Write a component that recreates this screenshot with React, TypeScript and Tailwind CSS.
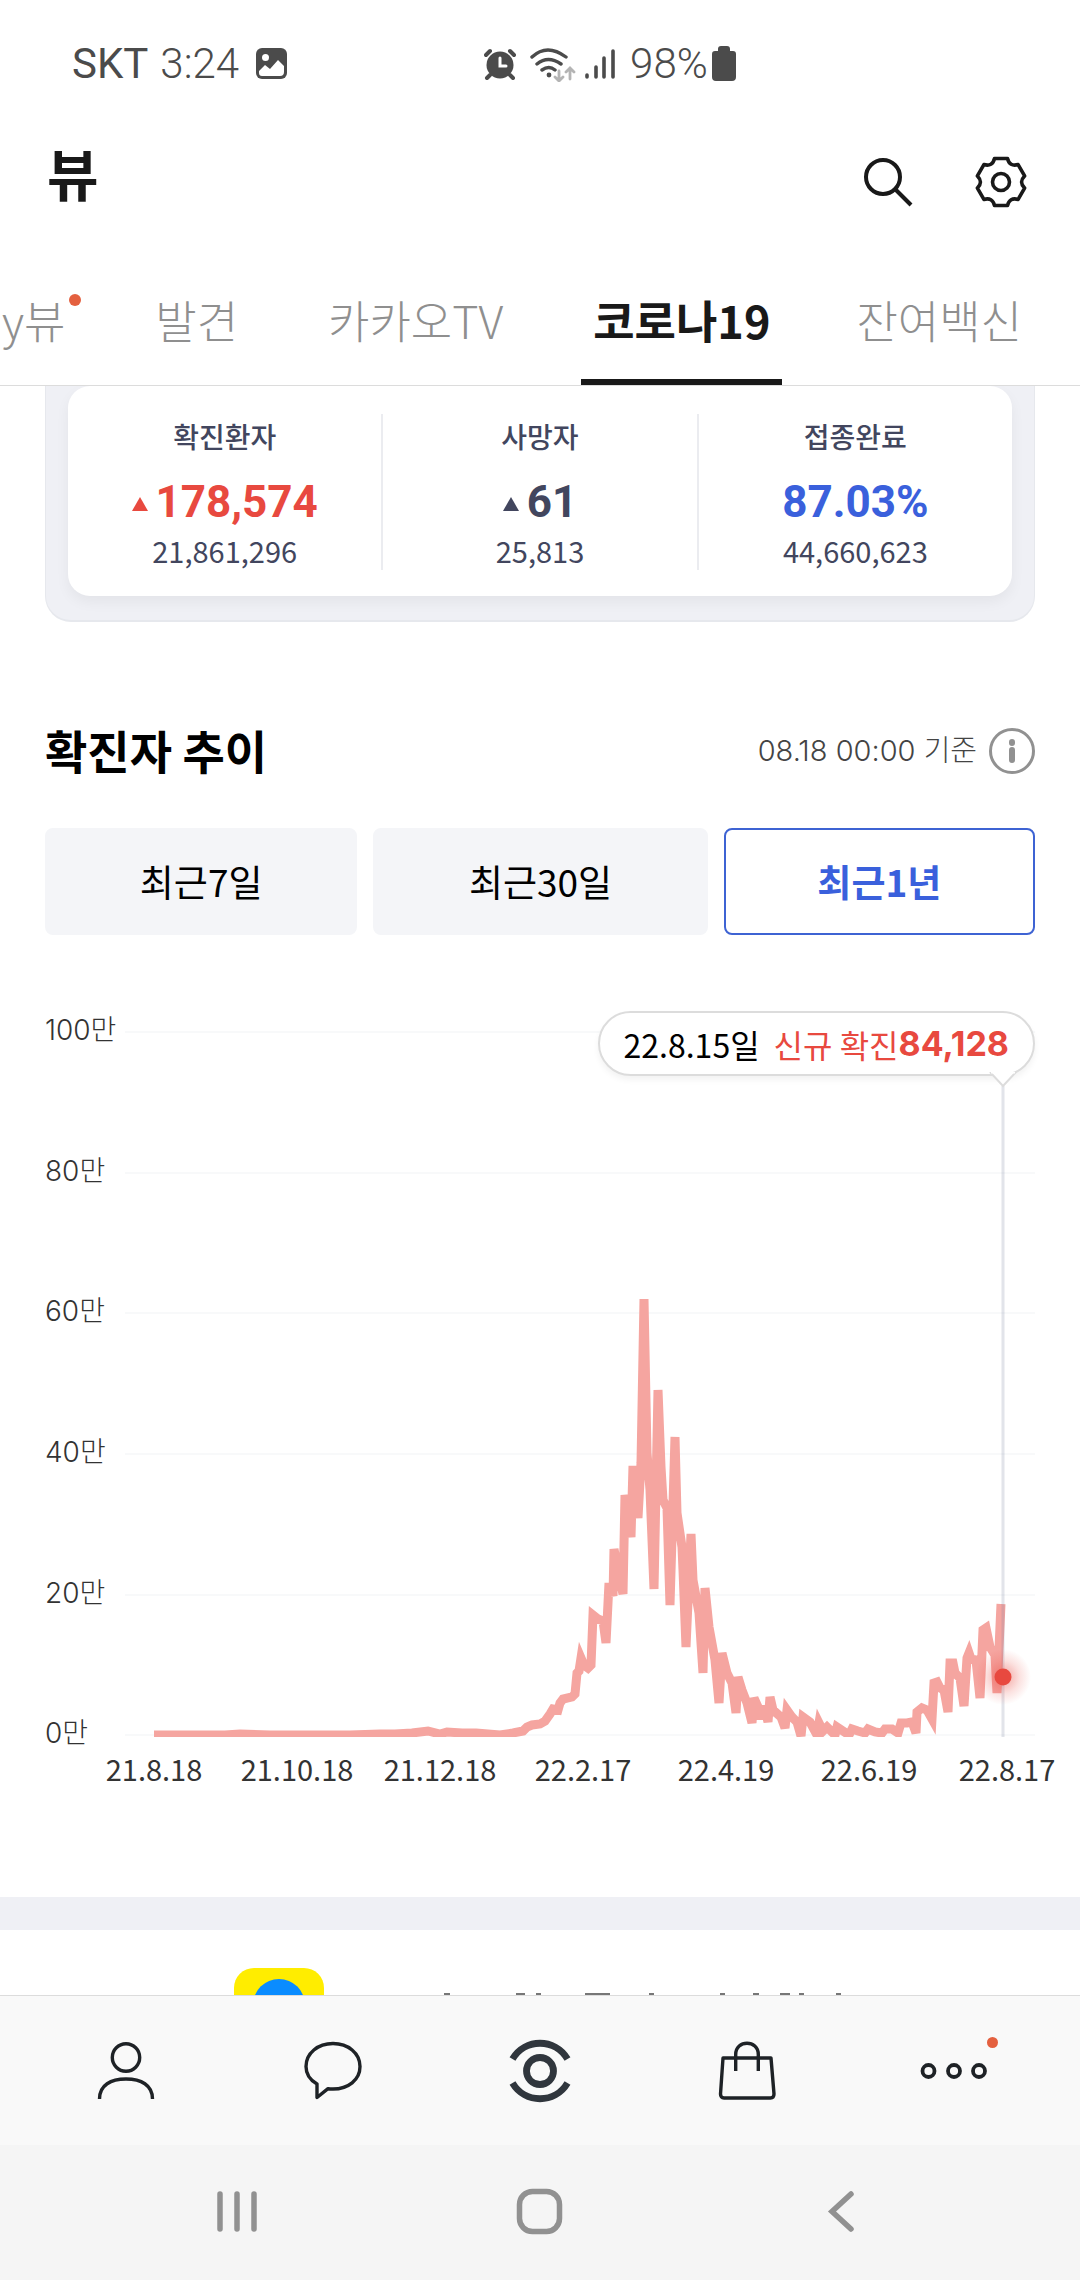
import clsx from "clsx";

const tabs = [
  { label: "y뷰", isNew: true, spacing: "pr-4" },
  { label: "발견", spacing: "px-3" },
  { label: "카카오TV", spacing: "px-4" },
  { label: "코로나19", active: true, spacing: "px-3" },
  { label: "잔여백신", spacing: "px-3" },
];

const stats = [
  { label: "확진환자", value: "178,574", total: "21,861,296", up: true, color: "text-[#e8493f]" },
  { label: "사망자", value: "61", total: "25,813", up: true, color: "text-[#42465e]" },
  { label: "접종완료", value: "87.03%", total: "44,660,623", up: false, color: "text-[#3a60dc]" },
];

const periods = [
  { label: "최근7일" },
  { label: "최근30일" },
  { label: "최근1년", active: true },
];

const yTicks = [
  { label: "100만", y: 32 },
  { label: "80만", y: 173 },
  { label: "60만", y: 313 },
  { label: "40만", y: 454 },
  { label: "20만", y: 595 },
  { label: "0만", y: 735 },
];

const xTicks = [
  { label: "21.8.18", x: 154 },
  { label: "21.10.18", x: 297 },
  { label: "21.12.18", x: 440 },
  { label: "22.2.17", x: 583 },
  { label: "22.4.19", x: 726 },
  { label: "22.6.19", x: 869 },
  { label: "22.8.17", x: 1007 },
];

// x,y pairs in chart units, left to right
const trend =
  "154,735 200,735 225,735 240,734 270,735 310,735 350,735 380,734 395,734 412,733 " +
  "428,731 440,734 447,732 462,733 476,733 500,735 513,733 523,731 527,727 532,725 540,724 " +
  "545,721 550,714 553,709 558,710 560,703 563,699 572,697 575,694 577,673 579,671 581,658 " +
  "584,665 588,668 591,665 593,615 598,619 603,621 606,643 609,583 613,596 614,549 618,570 " +
  "623,594 625,495 631,537 633,466 638,518 641,463 644,299 647,453 650,490 654,589 658,390 " +
  "661,467 663,500 667,508 670,605 675,437 677,513 682,547 683,570 686,647 691,534 693,580 " +
  "699,613 703,673 705,588 709,627 715,660 719,703 722,653 727,673 732,683 736,713 738,677 " +
  "742,690 747,703 752,723 754,698 758,707 761,719 764,706 768,722 770,697 773,710 781,717 " +
  "785,728 787,710 792,717 797,722 801,736 803,717 810,722 817,735 819,723 823,731 827,727 " +
  "835,735 837,727 843,731 849,735 852,729 858,731 865,733 868,729 875,732 882,733 885,729 " +
  "892,729 898,733 901,723 907,723 912,722 916,733 917,712 922,708 927,710 932,719 934,683 " +
  "937,682 940,688 944,690 948,712 950,663 953,663 955,673 960,678 964,706 967,658 969,653 " +
  "971,659 976,660 980,698 983,630 986,628 990,647 995,655 997,693 1001,604";

const StatusBar = () => (
  <div className="flex h-32 items-center pl-[72px] font-[Roboto,sans-serif] text-[42px] leading-none text-[#4b4b4b]">
    <span>SKT</span>
    <span className="ml-3 font-light">3:24</span>
    <svg className="ml-[17px] size-8 shrink-0" viewBox="0 0 32 32">
      <rect x="0" y="0" width="31" height="31" rx="6" fill="#4b4b4b" />
      <circle cx="9.500" cy="9.500" r="3.500" fill="#fff" />
      <path d="M3 23l6-6 5 4 8-9 6 6v6q0 4-4 4H6q-3 0-3-3z" fill="#fff" />
    </svg>
    <svg className="ml-[196px] size-8 shrink-0" viewBox="0 0 32 32" stroke="#4b4b4b" fill="none" strokeLinecap="round">
      <circle cx="16" cy="17" r="13.500" fill="#4b4b4b" stroke="none" />
      <path d="M2 7l4-4M30 7l-4-4M6 27l-3 3M26 27l3 3" strokeWidth="4" />
      <path d="M16 10v8h6" stroke="#fff" strokeWidth="3" />
    </svg>
    <svg className="ml-3 h-9 w-12 shrink-0" viewBox="0 0 48 36" stroke="#4b4b4b" strokeWidth="3.400" fill="none" strokeLinecap="round">
      <path d="M4 11q15-14 34 0M9 18q11-9 24 0M14 24q7-5 13 0" />
      <circle cx="21" cy="29" r="2.400" fill="#4b4b4b" stroke="none" />
      <path d="M31 25v9M27 31l4 4 4-4M42 33v-10M38 26l4-4 4 4" stroke="#b4b4b4" strokeWidth="2.800" />
    </svg>
    <svg className="ml-2 h-8 w-8 shrink-0" viewBox="0 0 32 32" stroke="#4b4b4b" strokeWidth="3.600" strokeLinecap="round">
      <path d="M3 27v2M12 19v10M20 10v19M29 3v26" />
    </svg>
    <span className="ml-3.5 font-light">98%</span>
    <svg className="ml-1 h-9 w-6 shrink-0" viewBox="0 0 24 36" fill="#4b4b4b">
      <path d="M6 3q0-3 3-3h6q3 0 3 3v2h3q3 0 3 3v23q0 4-4 4H4q-4 0-4-4V8q0-3 3-3h3z" />
    </svg>
  </div>
);

const Header = () => (
  <header className="flex h-[108px] items-center pr-[51px] pl-[47px]">
    <h1 className="-mt-5 text-[56px] leading-none font-bold text-[#191919]">뷰</h1>
    <button type="button" aria-label="검색" className="ml-auto">
      <svg className="size-14" viewBox="0 0 56 56" fill="none" stroke="#191919" strokeWidth="4">
        <circle cx="22" cy="23" r="17" />
        <path d="M34 35l16 16" />
      </svg>
    </button>
    <button type="button" aria-label="설정" className="ml-14">
      <svg className="size-14" viewBox="-28 -28 56 56" fill="none" stroke="#191919" strokeWidth="3.600" strokeLinejoin="round">
        <path d="M-6.500-23.500H6.500Q8.500-15 17.100-17.400L23.600-6.100Q17.500 0 23.600 6.100L17.100 17.400Q8.500 15 6.500 23.500H-6.500Q-8.500 15-17.100 17.400L-23.600 6.100Q-17.500 0-23.600-6.100L-17.100-17.400Q-8.500-15-6.500-23.500Z" />
        <circle r="8.500" />
      </svg>
    </button>
  </header>
);

const Tabs = () => (
  <nav className="flex justify-between border-b border-[#dcdcdc] pr-[46px] pl-0.5">
    {tabs.map((tab) => (
      <button
        key={tab.label}
        type="button"
        className={clsx(
          "relative h-[149px] border-b-[6px] pt-6 text-[45px] leading-none whitespace-nowrap",
          tab.spacing,
          tab.active ? "border-[#191919] font-bold text-[#191919]" : "border-transparent font-light text-[#8f8f8f]"
        )}
      >
        {tab.label}
        {tab.isNew && <span className="absolute top-[58px] right-0 size-3 rounded-full bg-[#e4603f]" />}
      </button>
    ))}
  </nav>
);

const StatsCard = () => (
  <section className="mx-[45px] rounded-b-[26px] border-x border-b-2 border-[#e6e8ed] bg-[#eff0f5] px-[22px] pb-6">
    <div className="flex rounded-[22px] bg-white pt-7 pb-[26px] shadow-[0_6px_14px_rgba(0,0,0,0.05)]">
      {stats.map((stat, i) => (
        <div
          key={stat.label}
          className={clsx("flex flex-1 flex-col items-center text-[#42465e]", i > 0 && "border-l-2 border-[#ebecf0]")}
        >
          <h3 className="text-[28px] leading-[44px] font-medium">{stat.label}</h3>
          <p className={clsx("mt-4 flex items-center gap-2 font-[Roboto,sans-serif] text-[44px] leading-[56px] font-bold", stat.color)}>
            {stat.up && (
              <svg className="mt-1 size-4" viewBox="0 0 16 16" fill="currentColor">
                <path d="M8 1l8 14H0z" />
              </svg>
            )}
            {stat.value}
          </p>
          <p className="text-[29px] leading-10">{stat.total}</p>
        </div>
      ))}
    </div>
  </section>
);

const TrendChart = () => (
  <div className="relative mt-[65px]">
    <svg className="w-full" viewBox="0 0 1080 800" role="img" aria-label="최근 1년 확진자 추이">
      <defs>
        <clipPath id="plot">
          <rect x="125" y="0" width="955" height="737" />
        </clipPath>
        <radialGradient id="glow">
          <stop offset="0.200" stopColor="#e8493f" stopOpacity="0.400" />
          <stop offset="0.600" stopColor="#e8493f" stopOpacity="0.160" />
          <stop offset="1" stopColor="#e8493f" stopOpacity="0" />
        </radialGradient>
      </defs>
      {yTicks.map((tick) => (
        <g key={tick.label}>
          <path d={`M125 ${tick.y}H1035`} stroke="#f8f9fa" strokeWidth="2" />
          <text
            x="45"
            y={tick.y + 8}
            className="font-[Inter,'Noto_Sans_CJK_KR',sans-serif] text-[28px] font-light"
            fill="#333"
          >
            {tick.label}
          </text>
        </g>
      ))}
      <polyline points={trend} clipPath="url(#plot)" fill="none" stroke="#f5a5a0" strokeWidth="9" />
      <path d="M1003 86V737" stroke="#7a84a0" strokeOpacity="0.220" strokeWidth="3" />
      <circle cx="1003" cy="677" r="28" fill="url(#glow)" />
      <circle cx="1003" cy="677" r="8.500" fill="#e8493f" />
      {xTicks.map((tick) => (
        <text key={tick.label} x={tick.x} y="781" textAnchor="middle" fontSize="29" fill="#333">
          {tick.label}
        </text>
      ))}
    </svg>
    <div className="absolute top-[11px] right-[45px] flex h-[65px] items-center rounded-full border-2 border-[#dcdcdc] bg-white px-6 text-[32px] leading-none whitespace-nowrap shadow-[0_4px_6px_rgba(0,0,0,0.05)]">
      <span className="text-black">22.8.15일</span>
      <span className="ml-3.5 text-[#e8493f]">신규 확진</span>
      <strong className="font-[Inter,sans-serif] text-[34px] font-bold text-[#e8493f]">84,128</strong>
      <svg className="absolute top-[59px] right-[16px] h-4 w-7" viewBox="0 0 28 16">
        <path d="M1 0L14 14L27 0" fill="#fff" stroke="#dcdcdc" strokeWidth="2" />
        <path d="M2 0H26" stroke="#fff" strokeWidth="3" />
      </svg>
    </div>
  </div>
);

const BottomNav = () => (
  <nav className="grid h-[150px] shrink-0 grid-cols-5 items-center justify-items-center border-t border-[#dcdcdc] bg-[#f9f9f9] px-[22px]">
    <button type="button" aria-label="친구">
      <svg className="size-16" viewBox="0 0 64 64" fill="none" stroke="#1e2226" strokeWidth="3.400">
        <ellipse cx="32" cy="18.500" rx="13.700" ry="13.700" />
        <path d="M5.500 60C5.500 46 17 40 32 40S58.500 46 58.500 60" />
      </svg>
    </button>
    <button type="button" aria-label="채팅">
      <svg className="size-16" viewBox="0 0 64 64" fill="none" stroke="#1e2226" strokeWidth="3.400" strokeLinejoin="round">
        <path d="M27 49.700L16 58.500V45C9 41 5 35 5 27.500C5 14 17 4.500 32 4.500S59 14 59 27.500S47 50 32 50Q29 50 27 49.700Z" />
      </svg>
    </button>
    <button type="button" aria-label="뷰">
      <svg className="size-[72px]" viewBox="0 0 72 72" fill="none" stroke="#30363d" strokeWidth="6.800">
        <circle cx="36" cy="36" r="13.500" />
        <path d="M8.500 24C21 3 51 3 63.500 24M8.500 48C21 69 51 69 63.500 48" />
      </svg>
    </button>
    <button type="button" aria-label="쇼핑">
      <svg className="size-16" viewBox="0 0 64 64" fill="none" stroke="#1e2226" strokeWidth="3.400" strokeLinejoin="round">
        <path d="M8 19H56L59 55Q59 59 55.500 59H9Q5.500 59 5.500 55Z" />
        <path d="M20.700 32V15.500C20.700 .5 43.300 .5 43.300 15.500V32" />
      </svg>
    </button>
    <button type="button" aria-label="더보기" className="relative">
      <svg className="h-16 w-[72px]" viewBox="0 0 72 64" fill="none" stroke="#1e2226" strokeWidth="3.800">
        <circle cx="10.500" cy="32" r="6" />
        <circle cx="36" cy="32" r="6" />
        <circle cx="61" cy="32" r="6" />
      </svg>
      <span className="absolute -top-0.5 -right-2 size-[11px] rounded-full bg-[#e4603f]" />
    </button>
  </nav>
);

const SystemBar = () => (
  <div className="grid h-[135px] shrink-0 grid-cols-3 items-center justify-items-center bg-[#f5f5f5] px-[86px] pb-0.5">
    <button type="button" aria-label="최근 앱">
      <svg className="size-12" viewBox="0 0 48 48" stroke="#919191" strokeWidth="5.500" strokeLinecap="round">
        <path d="M7 6V41M24 6V41M41 6V41" />
      </svg>
    </button>
    <button type="button" aria-label="홈">
      <svg className="size-12" viewBox="0 0 48 48" fill="none" stroke="#919191" strokeWidth="5.500">
        <rect x="3.500" y="3.500" width="40" height="40" rx="13" />
      </svg>
    </button>
    <button type="button" aria-label="뒤로">
      <svg className="size-12" viewBox="0 0 48 48" fill="none" stroke="#919191" strokeWidth="5.500" strokeLinecap="round">
        <path d="M32 6L13 23.500L32 41" />
      </svg>
    </button>
  </div>
);

export default function App() {
  return (
    <div className="flex h-screen flex-col overflow-hidden bg-white font-['Noto_Sans_CJK_KR',sans-serif]">
      <StatusBar />
      <Header />
      <Tabs />
      <main className="flex-1 overflow-hidden">
        <StatsCard />

        <section className="mt-[97px]">
          <div className="flex items-center px-[45px]">
            <h2 className="pb-1 text-[46px] leading-[60px] font-bold text-black">확진자 추이</h2>
            <span className="ml-auto font-[Inter,'Noto_Sans_CJK_KR',sans-serif] text-[29px] font-light text-[#444]">
              08.18 00:00 기준
            </span>
            <button type="button" aria-label="안내" className="ml-3">
              <svg className="size-[46px]" viewBox="0 0 46 46" fill="none" stroke="#919191">
                <circle cx="23" cy="23" r="21.500" strokeWidth="3" />
                <path d="M23 22v10M23 14v1" strokeWidth="6" strokeLinecap="round" />
              </svg>
            </button>
          </div>

          <div className="mt-[45px] grid grid-cols-[312fr_334fr_311fr] gap-4 px-[45px]">
            {periods.map((period) => (
              <button
                key={period.label}
                type="button"
                aria-pressed={Boolean(period.active)}
                className={clsx(
                  "h-[107px] rounded-lg border-2 text-[37px]",
                  period.active
                    ? "border-[#3e63d3] bg-white font-bold text-[#3a60dc]"
                    : "border-[#f4f5f8] bg-[#f4f5f8] text-black"
                )}
              >
                {period.label}
              </button>
            ))}
          </div>

          <TrendChart />
        </section>

        <div className="mt-[97px] h-[33px] bg-[#eff0f5]" />

        {/* Top edge of the next card, cut off by the bottom nav */}
        <svg className="mt-[38px] w-full" viewBox="0 0 1080 90" aria-hidden="true">
          <rect x="234" y="0" width="90" height="90" rx="20" fill="#ffed00" />
          <circle cx="279" cy="37" r="26" fill="#0a8cff" />
          <path
            d="M444 26h6M516 26h9M536 26h5M585 26h25M649 26h5M720 26h5M753 26h6M780 26h10M799 26h5M836 26h5"
            stroke="#777"
            strokeWidth="2"
          />
        </svg>
      </main>
      <BottomNav />
      <SystemBar />
    </div>
  );
}
